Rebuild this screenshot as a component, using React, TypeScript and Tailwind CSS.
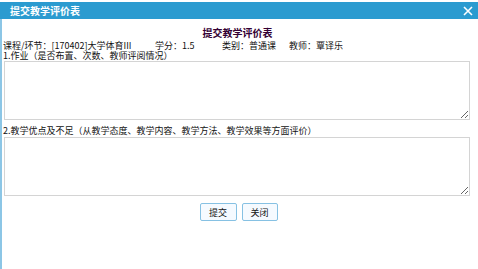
import React from "react";

const font = { fontFamily: '"Noto Sans CJK SC", "Liberation Sans", sans-serif' };

export default function App() {
    return (
        <div className="w-[478px] h-[269px] bg-white overflow-hidden" style={font}>
            {/* 背景页面露出的一条 */}
            <div className="h-[2px] bg-white" />
            {/* 标题栏 */}
            <div className="h-[17px] bg-[#2b9bd0] flex items-center justify-between pl-[10px] pr-[5px]">
                <span className="text-white text-[10px] font-bold leading-none">提交教学评价表</span>
                <svg width="10" height="10" viewBox="0 0 10 10">
                    <path d="M1 1 L9 9 M9 1 L1 9" stroke="white" strokeWidth="1.6" />
                </svg>
            </div>
            {/* 内容 */}
            <div className="h-[250px] border-l-2 border-[#8cc6e6] pl-[1px] pr-[6px] text-[9px] leading-[11px] text-[#111]">
                <div className="pt-[8px] text-center text-[10px] leading-[12px] font-bold text-[#330033]">
                    提交教学评价表
                </div>
                <div className="mt-[1px] flex h-[11px] whitespace-nowrap">
                    <span className="w-[152px] shrink-0">课程/环节：[170402]大学体育III</span>
                    <span className="w-[67px] shrink-0">学分：1.5</span>
                    <span className="w-[67px] shrink-0">类别：普通课</span>
                    <span>教师：覃译乐</span>
                </div>
                <div className="h-[10px] leading-[10px] whitespace-nowrap">1.作业（是否布置、次数、教师评阅情况）</div>
                <textarea className="block ml-[1px] w-[466px] h-[59px] border border-[#d4d4d4] bg-white resize" />
                <div className="mt-[5px] h-[12px] whitespace-nowrap">2.教学优点及不足（从教学态度、教学内容、教学方法、教学效果等方面评价）</div>
                <textarea className="block ml-[1px] w-[466px] h-[59px] border border-[#d4d4d4] bg-white resize" />
                <div className="mt-[7px] flex justify-center gap-[5px] pl-[2px]">
                    <button className="w-[37px] h-[18px] border border-[#86c1e3] rounded-[2px] bg-[#f5faff] text-[9px] text-[#111]">
                        提交
                    </button>
                    <button className="w-[36px] h-[18px] border border-[#86c1e3] rounded-[2px] bg-[#f5faff] text-[9px] text-[#111]">
                        关闭
                    </button>
                </div>
            </div>
        </div>
    );
}
